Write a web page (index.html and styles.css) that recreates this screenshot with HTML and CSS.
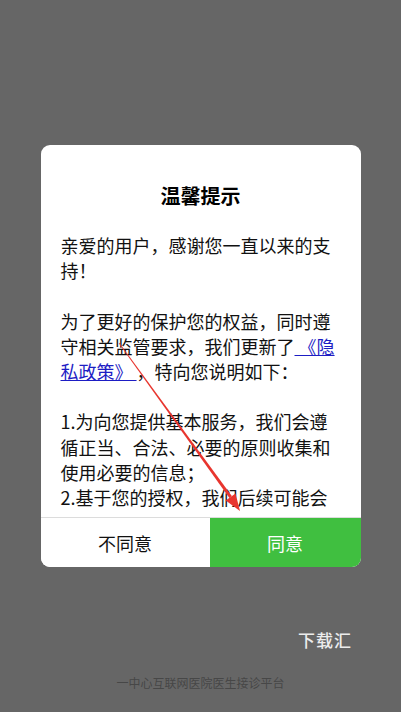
FILE: index.html
```html
<!DOCTYPE html>
<html lang="zh">
<head>
<meta charset="utf-8">
<link rel="stylesheet" href="styles.css">
</head>
<body>
<div class="page">
  <div class="dialog">
    <div class="content">
      <div class="title">温馨提示</div>
      <div class="text">亲爱的用户，感谢您一直以来的支持！<br><br>为了更好的保护您的权益，同时遵守相关监管要求，我们更新了<a class="link">&nbsp;《隐私政策》&nbsp;</a>，特向您说明如下：<br><br>1.为向您提供基本服务，我们会遵循正当、合法、必要的原则收集和使用必要的信息；<br>2.基于您的授权，我们后续可能会</div>
    </div>
    <div class="actions">
      <div class="btn btn-no">不同意</div>
      <div class="btn btn-yes">同意</div>
    </div>
  </div>
  <div class="download">下载汇</div>
  <div class="footer">一中心互联网医院医生接诊平台</div>
  <svg class="arrow" width="401" height="712" viewBox="0 0 401 712">
    <polygon points="119.3,342.8 231.8,496.1 229.4,497.9 118.7,343.2" fill="#e8352e"/>
    <polygon points="240,511 235.5,493.5 225.7,500.5" fill="#e8352e"/>
  </svg>
</div>
</body>
</html>
```
FILE: styles.css
```css
html, body {
  margin: 0;
  padding: 0;
}
body {
  background: #666666;
  font-family: "Noto Sans CJK SC", "Noto Sans", sans-serif;
}
.page {
  position: relative;
  width: 401px;
  height: 712px;
  padding-top: 145px;
  box-sizing: border-box;
  display: flex;
  flex-direction: column;
  overflow: hidden;
}
.dialog {
  width: 320px;
  height: 422px;
  margin: 0 auto;
  background: #ffffff;
  border-radius: 9px;
  overflow: hidden;
  display: flex;
  flex-direction: column;
}
.content {
  height: 373px;
  overflow: hidden;
  padding: 37px 20px 0 20px;
  box-sizing: border-box;
  border-bottom: 1px solid #dcdcdc;
}
.title {
  font-size: 20px;
  line-height: 28px;
  font-weight: bold;
  text-align: center;
  color: #000;
}
.text {
  margin-top: 23px;
  font-size: 18px;
  line-height: 25.2px;
  color: #111;
}
.link {
  color: #1d1dc4;
  text-decoration: underline;
}
.actions {
  flex: 1;
  display: flex;
}
.btn {
  flex: 1 1 auto;
  display: flex;
  align-items: center;
  justify-content: center;
  font-size: 18px;
}
.btn-no {
  color: #111;
  background: #fff;
}
.btn-yes {
  color: #fff;
  background: #40bf40;
}
.download {
  margin-top: 61px;
  padding-right: 49px;
  text-align: right;
  font-size: 17px;
  line-height: 24px;
  font-weight: 500;
  color: #ececec;
  letter-spacing: 1px;
}
.footer {
  margin-top: 22px;
  text-align: center;
  font-size: 12px;
  line-height: 17px;
  color: #474747;
}
.arrow {
  position: absolute;
  left: 0;
  top: 0;
  pointer-events: none;
}
```
